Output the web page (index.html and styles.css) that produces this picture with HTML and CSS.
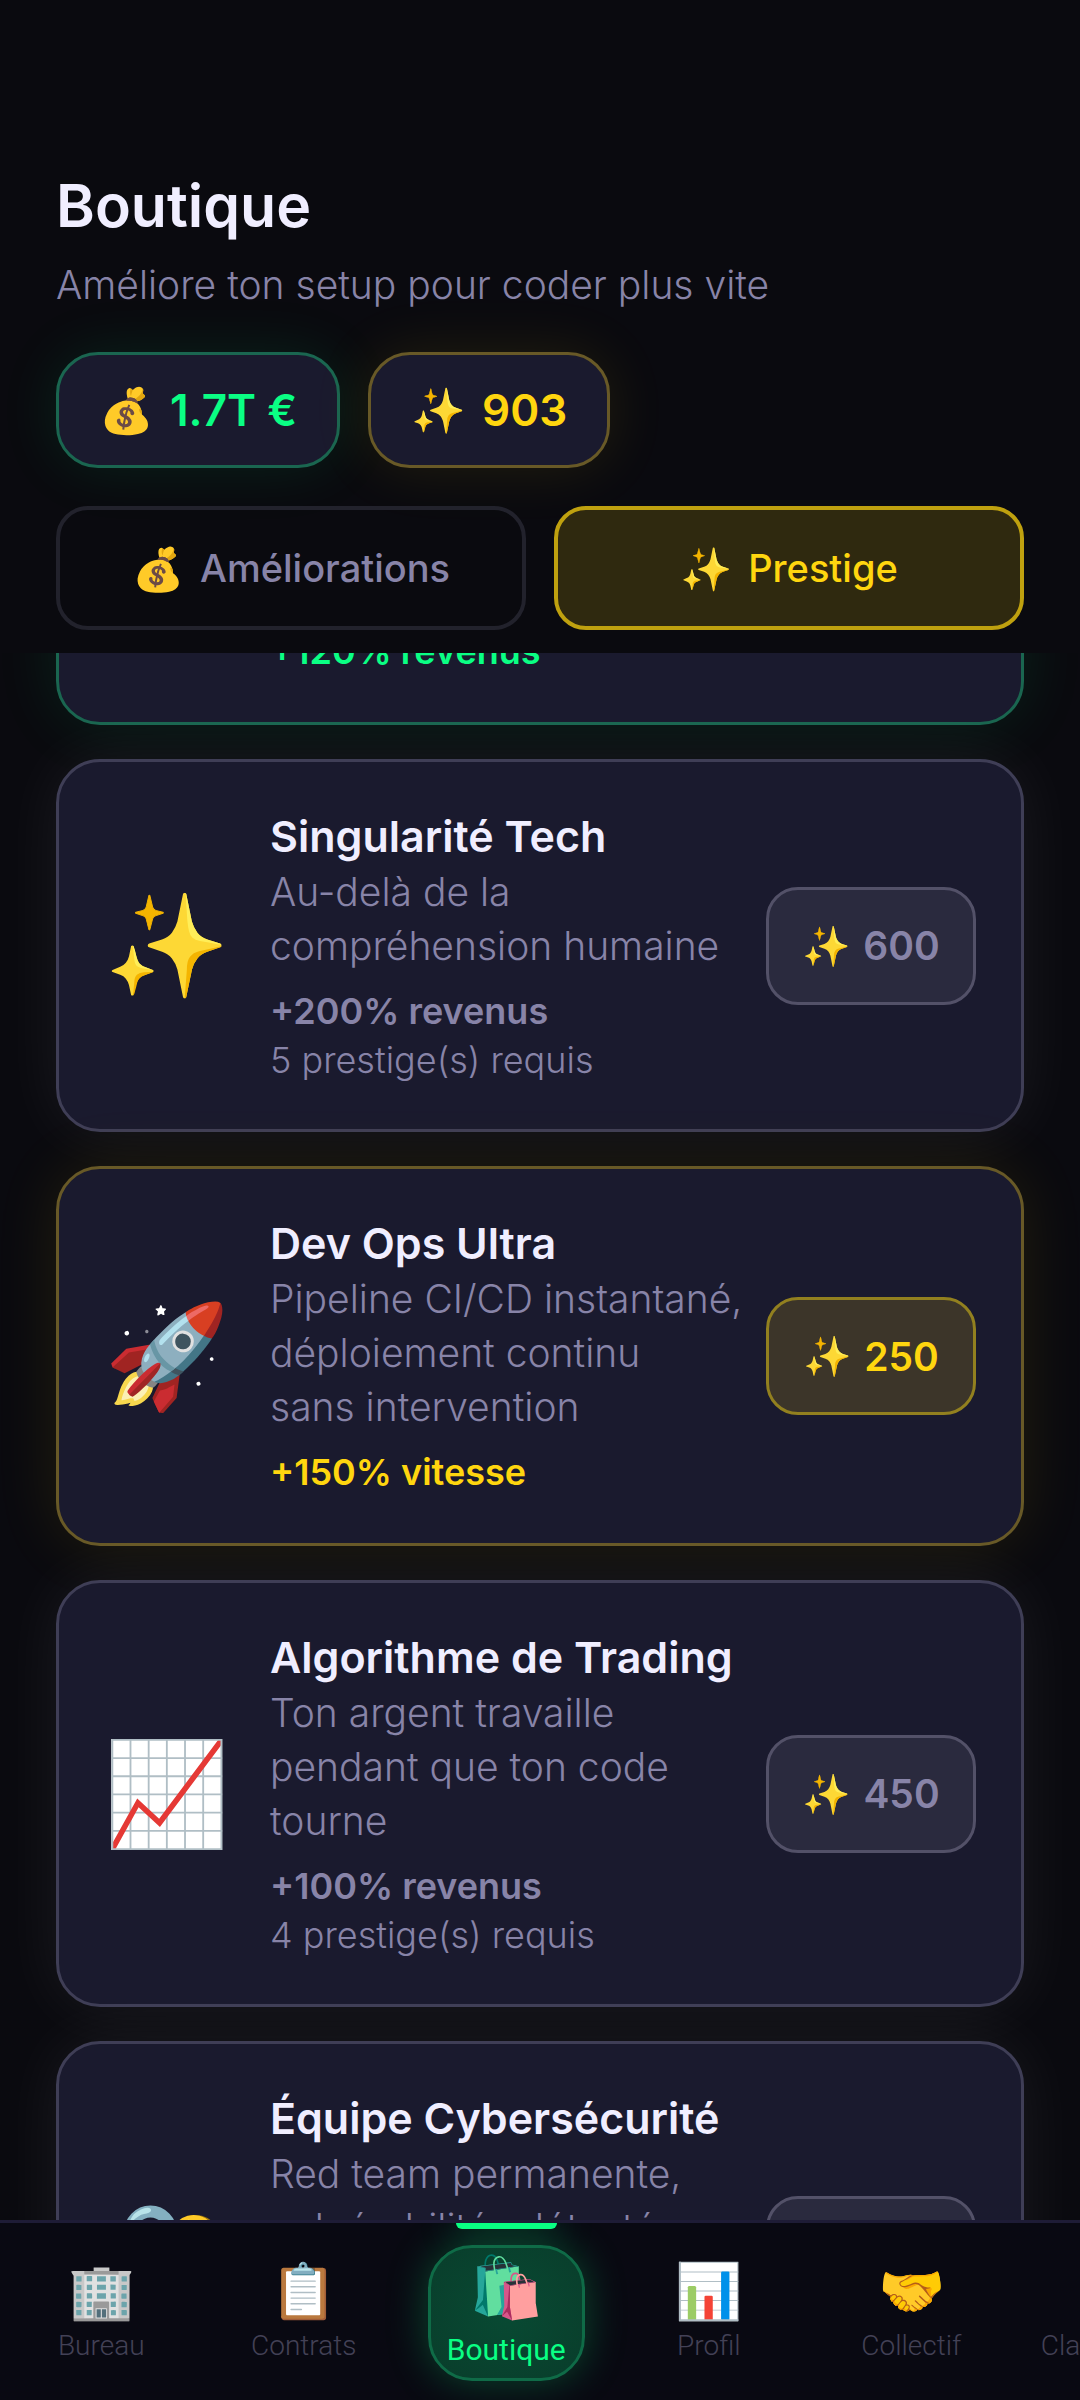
FILE: index.html
```html
<!DOCTYPE html>
<html lang="fr">
<head>
<meta charset="utf-8">
<meta name="viewport" content="width=device-width, initial-scale=1">
<title>Boutique</title>
<link rel="stylesheet" href="styles.css">
</head>
<body>
<div class="app">
  <header class="top">
    <h1 class="top-title">Boutique</h1>
    <p class="top-sub">Améliore ton setup pour coder plus vite</p>
    <div class="wallet">
      <div class="pill pill-money"><span>💰</span><span>1.7T €</span></div>
      <div class="pill pill-prestige"><span>✨</span><span>903</span></div>
    </div>
    <div class="tabs">
      <button class="tab" type="button"><span class="tab-icon">💰</span><span>Améliorations</span></button>
      <button class="tab tab-active" type="button"><span class="tab-icon">✨</span><span>Prestige</span></button>
    </div>
  </header>

  <main class="list">
    <article class="card card-owned">
      <div class="card-icon"></div>
      <div class="card-body"><p class="bonus">+120% revenus</p></div>
    </article>
    <article class="card">
      <div class="card-icon">✨</div>
      <div class="card-body">
        <h2 class="card-title">Singularité Tech</h2>
        <p class="desc">Au-delà de la<br>compréhension humaine</p>
        <p class="bonus">+200% revenus</p>
        <p class="need">5 prestige(s) requis</p>
      </div>
      <button class="price" type="button"><span>✨</span><span>600</span></button>
    </article>
    <article class="card card-open">
      <div class="card-icon">🚀</div>
      <div class="card-body">
        <h2 class="card-title">Dev Ops Ultra</h2>
        <p class="desc">Pipeline CI/CD instantané,<br>déploiement continu<br>sans intervention</p>
        <p class="bonus">+150% vitesse</p>
      </div>
      <button class="price" type="button"><span>✨</span><span>250</span></button>
    </article>
    <article class="card">
      <div class="card-icon">📈</div>
      <div class="card-body">
        <h2 class="card-title">Algorithme de Trading</h2>
        <p class="desc">Ton argent travaille<br>pendant que ton code<br>tourne</p>
        <p class="bonus">+100% revenus</p>
        <p class="need">4 prestige(s) requis</p>
      </div>
      <button class="price" type="button"><span>✨</span><span>450</span></button>
    </article>
    <article class="card">
      <div class="card-icon">🔐</div>
      <div class="card-body card-body-tall">
        <h2 class="card-title">Équipe Cybersécurité</h2>
        <p class="desc">Red team permanente,<br>vulnérabilités détectées</p>
      </div>
      <button class="price" type="button" aria-label="Acheter"></button>
    </article>
  </main>

  <nav class="nav">
    <a class="nav-item" href="#bureau"><span class="nav-icon">🏢</span><span>Bureau</span></a>
    <a class="nav-item" href="#contrats"><span class="nav-icon">📋</span><span>Contrats</span></a>
    <a class="nav-item nav-active" href="#boutique"><span class="nav-chip"><span class="nav-icon">🛍️</span><span>Boutique</span></span></a>
    <a class="nav-item" href="#profil"><span class="nav-icon">📊</span><span>Profil</span></a>
    <a class="nav-item" href="#collectif"><span class="nav-icon">🤝</span><span>Collectif</span></a>
    <a class="nav-item" href="#classement"><span class="nav-icon"></span><span>Classement</span></a>
  </nav>
</div>
</body>
</html>
```
FILE: styles.css
```css
:root {
  --bg: #0a0a0f;
  --panel: #1a1a2e;
  --text: #f0eeff;
  --muted: #8884a8;
  --green: #0aff84;
  --gold: #ffd60f;
}

* { box-sizing: border-box; }

body {
  margin: 0;
  background: var(--bg);
  color: var(--text);
  font-family: Inter, "Noto Sans", sans-serif;
}

h1, h2, p { margin: 0; }
button { font: inherit; color: inherit; background: none; margin: 0; }

.app {
  height: 100vh;
  display: flex;
  flex-direction: column;
  overflow: hidden;
}

.top {
  position: relative;
  z-index: 1;
  flex: none;
  padding: 164px 56px 23px;
  background: var(--bg);
}
.top-title { font-size: 59px; line-height: 84px; font-weight: 600; }
.top-sub { font-size: 39px; line-height: 56px; margin-top: 9px; font-weight: 300; color: var(--muted); }

.wallet { display: flex; gap: 28px; margin-top: 39px; }
.pill {
  display: flex;
  align-items: center;
  gap: 16px;
  height: 116px;
  padding: 0 40px;
  border: 3px solid;
  border-radius: 42px;
  background: var(--panel);
  font-size: 44px;
  font-weight: 600;
}
.pill-money { color: var(--green); border-color: #1a6650; box-shadow: 0 0 60px #0aff841a; }
.pill-prestige { color: var(--gold); border-color: #685927; box-shadow: 0 0 60px #ffd60f1a; }

.tabs { display: flex; gap: 28px; margin-top: 38px; }
.tab {
  flex: 1;
  height: 124px;
  display: flex;
  align-items: center;
  justify-content: center;
  gap: 16px;
  border: 4px solid #22222c;
  border-radius: 32px;
  font-size: 38px;
  font-weight: 500;
  color: var(--muted);
}
.tab-icon { font-size: 42px; }
.tab-active { color: var(--gold); border-color: #bfa10f; background: #2f290f; }

.list {
  flex: 1;
  min-height: 0;
  display: flex;
  flex-direction: column;
  gap: 34px;
  padding: 0 56px;
  margin-top: -76px;
  overflow: hidden;
}
.card {
  flex: none;
  display: flex;
  align-items: center;
  padding: 45px;
  border: 3px solid #3f3e56;
  border-radius: 44px;
  background: var(--panel);
  box-shadow: 0 0 64px #ffffff12;
}
.card-owned { border-color: #1a6650; box-shadow: 0 0 64px #0aff841a; }
.card-open { border-color: #685927; box-shadow: 0 0 64px #ffd60f1a; }
.card-icon {
  width: 126px;
  margin-right: 40px;
  padding-bottom: 4px;
  text-align: center;
  font-size: 101px;
  line-height: 118px;
}
.card-body { flex: 1; min-width: 0; white-space: nowrap; }
.card-body-tall { min-height: 331px; }
.card-title { font-size: 43px; line-height: 58px; font-weight: 600; }
.desc { font-size: 39px; line-height: 54px; font-weight: 300; color: var(--muted); }
.bonus { font-size: 36px; line-height: 52px; font-weight: 600; color: var(--muted); }
.desc + .bonus { margin-top: 12px; }
.card-owned .bonus { color: var(--green); }
.card-open .bonus { color: var(--gold); }
.need { font-size: 36px; line-height: 47px; font-weight: 300; color: var(--muted); }
.price {
  flex: none;
  height: 118px;
  min-width: 210px;
  display: flex;
  align-items: center;
  justify-content: center;
  gap: 12px;
  padding: 0 32px;
  border: 3px solid #535168;
  border-radius: 32px;
  background: #2a2a3e;
  color: var(--muted);
  font-size: 39px;
  font-weight: 600;
}
.card-open .price { color: var(--gold); border-color: #92801f; background: #3c3529; }

.nav {
  position: relative;
  z-index: 1;
  flex: none;
  display: flex;
  height: 180px;
  border-top: 3px solid #1e1c36;
  background: #090912;
  overflow: hidden;
}
.nav-item {
  flex: 0 0 18.75%;
  display: flex;
  flex-direction: column;
  align-items: center;
  padding-top: 36px;
  font-family: Roboto, sans-serif;
  font-weight: 300;
  font-size: 28px;
  line-height: 42px;
  color: #434156;
  text-decoration: none;
}
.nav-icon { display: block; height: 66px; font-size: 54px; line-height: 66px; }
.nav-active {
  position: relative;
  padding-top: 22px;
  font-size: 30px;
  font-weight: 400;
  color: var(--green);
}
.nav-active::before {
  content: "";
  position: absolute;
  top: 0;
  left: 25%;
  width: 50%;
  height: 6px;
  border-radius: 0 0 6px 6px;
  background: var(--green);
  box-shadow: 0 0 36px #0aff8499;
}
.nav-chip {
  position: relative;
  display: flex;
  flex-direction: column;
  align-items: center;
  height: 136px;
  padding: 1px 16px 0;
  border: 3px solid #0f6b47;
  border-radius: 44px;
  background: radial-gradient(#084a33, #093d2b);
  box-shadow: 0 0 42px #0aff8440;
}
.nav-chip .nav-icon { height: 80px; font-size: 60px; line-height: 78px; }
```
